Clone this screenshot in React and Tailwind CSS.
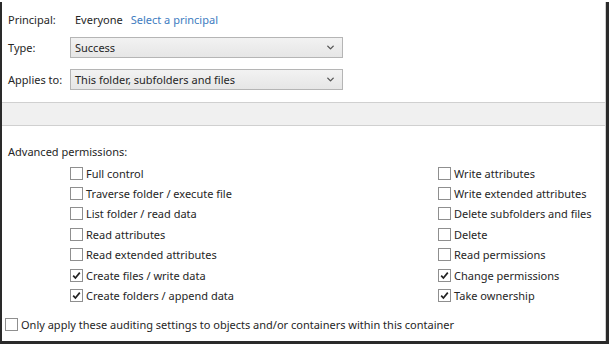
import { ChevronDown } from "lucide-react";

const left = [
  { label: "Full control", checked: false },
  { label: "Traverse folder / execute file", checked: false },
  { label: "List folder / read data", checked: false },
  { label: "Read attributes", checked: false },
  { label: "Read extended attributes", checked: false },
  { label: "Create files / write data", checked: true },
  { label: "Create folders / append data", checked: true },
];

const right = [
  { label: "Write attributes", checked: false },
  { label: "Write extended attributes", checked: false },
  { label: "Delete subfolders and files", checked: false },
  { label: "Delete", checked: false },
  { label: "Read permissions", checked: false },
  { label: "Change permissions", checked: true },
  { label: "Take ownership", checked: true },
];

function Box({ checked }) {
  return (
    <span className="w-[13px] h-[13px] border border-[#8f8f8f] bg-white flex items-center justify-center shrink-0">
      {checked && (
        <svg width="9" height="9" viewBox="0 0 9 9">
          <path d="M1.2 4.6 L3.4 7 L7.8 1.6" fill="none" stroke="#222" strokeWidth="1.7" />
        </svg>
      )}
    </span>
  );
}

function Check({ label, checked }) {
  return (
    <div className="h-[20.4px] flex items-center gap-[3px]">
      <Box checked={checked} />
      <span>{label}</span>
    </div>
  );
}

function Select({ value }) {
  return (
    <div className="w-[273px] h-[21px] border border-[#b5b5b5] bg-gradient-to-b from-[#f2f2f2] to-[#e6e6e6] flex items-center justify-between pl-[4px] pr-[6px]">
      <span>{value}</span>
      <ChevronDown size={11} strokeWidth={3} className="text-[#555]" />
    </div>
  );
}

export default function App() {
  return (
    <div className="w-[609px] h-[344px] bg-[#2a2a2a] text-[11px] text-[#262626] font-['Noto_Sans',sans-serif] leading-none">
      <div className="w-[604px] h-[339px] ml-[2px] mt-[2px] bg-white flex flex-col border-r border-[#cfcfcf]">
        <div className="px-[6px] pt-[9px] flex flex-col">
          <div className="h-[17px] flex items-center">
            <span className="w-[67px]">Principal:</span>
            <span>Everyone</span>
            <span className="ml-[8px] text-[#3e7cbf]">Select a principal</span>
          </div>
          <div className="mt-[9px] flex items-center">
            <span className="w-[62px]">Type:</span>
            <Select value="Success" />
          </div>
          <div className="mt-[11px] flex items-center">
            <span className="w-[62px]">Applies to:</span>
            <Select value="This folder, subfolders and files" />
          </div>
        </div>
        <div className="mt-[12px] h-[24px] bg-[#f0f0f0] border-y border-[#d0d0d0]" />
        <div className="px-[6px] pt-[20px]">Advanced permissions:</div>
        <div className="mt-[6px] flex pl-[68px]">
          <div className="w-[368px] flex flex-col">
            {left.map((c) => (
              <Check key={c.label} {...c} />
            ))}
          </div>
          <div className="flex flex-col">
            {right.map((c) => (
              <Check key={c.label} {...c} />
            ))}
          </div>
        </div>
        <div className="mt-[12px] pl-[3px] flex items-center gap-[3px]">
          <Box checked={false} />
          <span>Only apply these auditing settings to objects and/or containers within this container</span>
        </div>
      </div>
    </div>
  );
}
